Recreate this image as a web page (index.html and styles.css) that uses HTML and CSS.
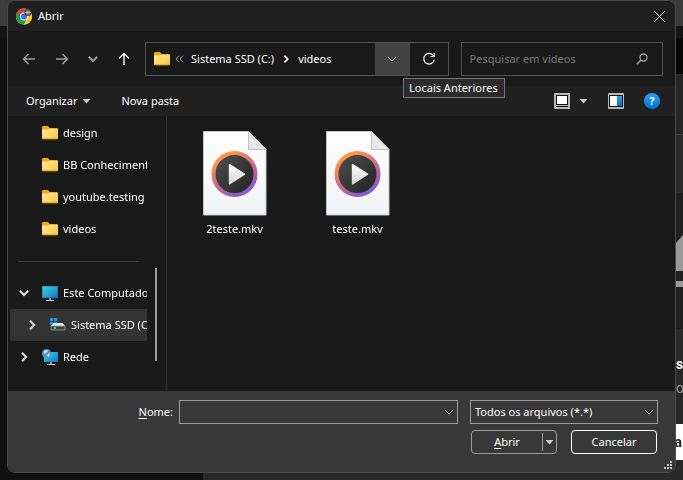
FILE: index.html
```html
<!DOCTYPE html>
<html lang="pt-BR">
<head>
<meta charset="utf-8">
<title>Abrir</title>
<link rel="stylesheet" href="styles.css">
</head>
<body>
<svg class="defs" width="0" height="0" aria-hidden="true">
  <defs>
    <linearGradient id="g-folder" x1="0" y1="0" x2="1" y2="1"><stop offset="0" stop-color="#ffe9a2"/><stop offset="1" stop-color="#fdc736"/></linearGradient>
    <linearGradient id="g-screen" x1="0" y1="0" x2="1" y2="1"><stop offset="0" stop-color="#3fd6e0"/><stop offset="1" stop-color="#0f74c8"/></linearGradient>
    <linearGradient id="g-paper" x1="0" y1="0" x2="0" y2="1"><stop offset="0" stop-color="#fdfdfd"/><stop offset="1" stop-color="#f3f4f7"/></linearGradient>
    <linearGradient id="g-ring" x1="0.2" y1="0" x2="0.8" y2="1"><stop offset="0.1" stop-color="#ff9447"/><stop offset="0.5" stop-color="#cf6d84"/><stop offset="0.95" stop-color="#8459cf"/></linearGradient>
    <linearGradient id="g-disc" x1="0" y1="0" x2="1" y2="1"><stop offset="0" stop-color="#505050"/><stop offset="1" stop-color="#202020"/></linearGradient>
    <linearGradient id="g-play" x1="0" y1="0" x2="0" y2="1"><stop offset="0" stop-color="#ffffff"/><stop offset="1" stop-color="#d4d4d4"/></linearGradient>
    <linearGradient id="g-fold" x1="0" y1="1" x2="1" y2="0"><stop offset="0" stop-color="#e2e2e2"/><stop offset="1" stop-color="#f8f8f8"/></linearGradient>
    <linearGradient id="g-help" x1="0" y1="0" x2="0" y2="1"><stop offset="0" stop-color="#27a1ee"/><stop offset="1" stop-color="#0673d3"/></linearGradient>
  </defs>
  <symbol id="folder" viewBox="0 0 16 14">
    <path d="M0 1.2Q0 0 1.2 0H6L8 2.2H14.8Q16 2.2 16 3.4V8H0z" fill="#f5a90c"/>
    <path d="M0 4.2Q0 3.6 .8 3.6H6.2L7.8 2.6H15.2Q16 2.6 16 3.4V12Q16 13.2 14.8 13.2H1.2Q0 13.2 0 12z" fill="url(#g-folder)"/>
    <path d="M.4 12.6H15.6" stroke="#e5a11c" stroke-width=".8"/>
  </symbol>
  <symbol id="chevron" viewBox="0 0 10 10"><path d="M.8 2.8 5 7 9.2 2.8" fill="none" stroke="currentColor"/></symbol>
  <symbol id="chevron-right" viewBox="0 0 10 10"><path d="M3 .8 7.2 5 3 9.2" fill="none" stroke="currentColor"/></symbol>
  <symbol id="triangle" viewBox="0 0 8 5"><path d="M0 0H8L4 4.6z" fill="currentColor"/></symbol>
  <symbol id="monitor" viewBox="0 0 16 15">
    <path d="M0 0H16V12H0z" fill="url(#g-screen)"/><path d="M.3 .3H15.7V11.7H.3z" fill="none" stroke="#17688f" stroke-width=".6"/>
    <path d="M7 12H9V14H7z" fill="#8d99a1"/><path d="M4 14H12V15H4z" fill="#c4ccd1"/>
  </symbol>
  <symbol id="media-file" viewBox="0 0 64 85">
    <path d="M.5 .5H45.500L63 18.500V84H.5z" fill="url(#g-paper)" stroke="#c4c6c6"/>
    <path d="M45.500 .5V18.500H63z" fill="url(#g-fold)" stroke="#c2c2c2"/>
    <circle cx="31.500" cy="43" r="21" fill="url(#g-disc)" stroke="url(#g-ring)" stroke-width="4"/>
    <path d="M26.500 33.500V53L41.500 43.200z" fill="url(#g-play)" stroke="url(#g-play)" stroke-width="1.400" stroke-linejoin="round"/>
  </symbol>
</svg>

<div class="backdrop" aria-hidden="true">
  <div class="tabstrip"><i class="tab-mark"></i></div>
  <div class="browser-bar"></div>
  <div class="address-line"></div>
  <div class="site">
    <div class="site-menu"></div>
    <div class="site-main">
      <div class="site-head"></div>
      <div class="site-row"></div>
      <div class="site-art">
        <svg width="7" height="52" viewBox="0 0 7 52"><path d="M0 8 7 0V36H0zM0 46H7V52H0z" fill="#999"/></svg>
      </div>
      <div class="site-text"><b>s</b><span>o</span></div>
      <div class="site-button">a</div>
    </div>
  </div>
</div>

<main class="dialog" role="dialog" aria-labelledby="title">
  <header class="titlebar">
    <svg width="17" height="17" viewBox="0 0 17 17" aria-hidden="true">
      <circle cx="8" cy="8.500" r="8" fill="#fff"/>
      <path d="M8 8.500 1.070 4.500A8 8 0 0 1 14.930 4.500z" fill="#e33b2e"/>
      <path d="M1.070 4.500A8 8 0 0 0 8 16.500L11.400 10.500 8 8.500z" fill="#219a4b"/>
      <path d="M14.930 4.500A8 8 0 0 1 8 16.500L11.400 10.500 8 4.500z" fill="#fbc51c"/>
      <path d="M1.070 4.500 4.800 10.400 8 8.500V4.500z" fill="#e33b2e"/>
      <circle cx="8" cy="8.500" r="4" fill="#fff"/><circle cx="8" cy="8.500" r="3.100" fill="#2878e8"/>
      <circle cx="12" cy="4.500" r="3.600" fill="#343434"/>
      <path d="M9 4.500H15M12 1.500V7.500M9.800 2.500 14.200 6.500M14.200 2.500 9.800 6.500" stroke="#c8c8c8" stroke-width=".8"/>
    </svg>
    <h1 id="title">Abrir</h1>
    <button class="bare close" aria-label="Fechar"><svg width="11" height="11" viewBox="0 0 11 11"><path d="M.5 .5 10.500 10.500M10.500 .5 .5 10.500" stroke="#fff"/></svg></button>
  </header>

  <nav class="navbar">
    <div class="history">
      <button class="bare dim" aria-label="Voltar"><svg width="14" height="14" viewBox="0 0 14 14"><path d="M13 7H1.500M6.500 2 1.500 7 6.500 12" fill="none" stroke="currentColor" stroke-width="1.500"/></svg></button>
      <button class="bare dim" aria-label="Avançar"><svg width="14" height="14" viewBox="0 0 14 14"><path d="M1 7H12.500M7.500 2 12.500 7 7.500 12" fill="none" stroke="currentColor" stroke-width="1.500"/></svg></button>
      <button class="bare dim" aria-label="Locais recentes"><svg class="bold" width="10" height="10"><use href="#chevron"/></svg></button>
      <button class="bare" aria-label="Acima"><svg width="14" height="14" viewBox="0 0 14 14"><path d="M7 13V1.500M2 6.500 7 1.500 12 6.500" fill="none" stroke="currentColor" stroke-width="1.400"/></svg></button>
    </div>
    <div class="address">
      <svg width="16" height="14" aria-hidden="true"><use href="#folder"/></svg>
      <svg class="more" width="9" height="8" viewBox="0 0 9 8" aria-hidden="true"><path d="M4 .8 1 4 4 7.200M8 .8 5 4 8 7.200" fill="none" stroke="#aaa"/></svg>
      <a href="#">Sistema SSD (C:)</a>
      <svg class="bold crumb" width="8" height="8" aria-hidden="true"><use href="#chevron-right"/></svg>
      <a href="#">videos</a>
      <button class="bare previous" aria-label="Locais Anteriores" aria-describedby="tip"><svg width="10" height="10"><use href="#chevron"/></svg></button>
      <button class="bare refresh" aria-label="Atualizar"><svg width="14" height="14" viewBox="0 0 14 14"><path d="M11.600 4A5.300 5.300 0 1 0 12.300 7.500M12.200 1V4.500H8.600" fill="none" stroke="currentColor" stroke-width="1.200"/></svg></button>
      <span class="tooltip" id="tip" role="tooltip">Locais Anteriores</span>
    </div>
    <div class="search">
      <input type="text" aria-label="Pesquisar em videos" placeholder="Pesquisar em videos">
      <svg width="12" height="12" viewBox="0 0 12 12" aria-hidden="true"><circle cx="7.500" cy="4.500" r="3.500" fill="none" stroke="#a0a0a0" stroke-width="1.300"/><path d="M5 7 .8 11.200" stroke="#a0a0a0" stroke-width="1.500"/></svg>
    </div>
  </nav>

  <div class="toolbar">
    <button class="bare">Organizar <svg width="9" height="5"><use href="#triangle"/></svg></button>
    <button class="bare">Nova pasta</button>
    <div class="view-tools">
      <button class="bare view" aria-label="Modo de exibição">
        <svg width="16" height="16" viewBox="0 0 16 16"><rect width="16" height="16" rx="1" fill="#b5b9b9"/><path d="M2 2H14V14H2z" fill="#111"/><path d="M3 3H13V11H3z" fill="#fff"/><path d="M2 12H14V13H2z" fill="#b5b9b9"/></svg>
        <svg width="9" height="5"><use href="#triangle"/></svg>
      </button>
      <button class="bare" aria-label="Painel de visualização"><svg width="16" height="16" viewBox="0 0 16 16"><rect width="16" height="16" rx="1" fill="#b5b9b9"/><path d="M1 2H15V14H1z" fill="#111"/><path d="M2 3H9V13H2z" fill="#fff"/><path d="M9 3H14V13H9z" fill="url(#g-help)"/></svg></button>
      <button class="bare help" aria-label="Ajuda">?</button>
    </div>
  </div>

  <section class="content">
    <aside class="tree">
      <ul>
        <li><svg width="16" height="14"><use href="#folder"/></svg>design</li>
        <li><svg width="16" height="14"><use href="#folder"/></svg>BB Conhecimento</li>
        <li><svg width="16" height="14"><use href="#folder"/></svg>youtube.testing</li>
        <li><svg width="16" height="14"><use href="#folder"/></svg>videos</li>
      </ul>
      <hr>
      <ul>
        <li class="branch"><svg class="bold" width="10" height="10"><use href="#chevron"/></svg><svg width="16" height="15"><use href="#monitor"/></svg>Este Computador</li>
        <li class="branch child"><svg class="bold" width="10" height="10"><use href="#chevron-right"/></svg>
          <svg width="16" height="16" viewBox="0 0 16 16"><path d="M0 1H3.300V4.300H0zM4 1H7.300V4.300H4zM0 5H3.300V8.300H0zM4 5H7.300V8.300H4z" fill="#1499ef"/><path d="M3.500 6H12.500L15 9H1z" fill="#e5e7e8"/><path d="M1 9H15V13H1z" fill="#3e4342" stroke="#a8acac" stroke-width=".7"/><path d="M4 10H6V12H4z" fill="#2fe33c"/></svg>Sistema SSD (C:)</li>
        <li class="branch"><svg class="bold" width="10" height="10"><use href="#chevron-right"/></svg>
          <svg width="16" height="16" viewBox="0 0 16 16"><path d="M2 3H16V13H2z" fill="url(#g-screen)"/><path d="M8 13H10V15H8z" fill="#8d99a1"/><path d="M5 15H13V16H5z" fill="#c4ccd1"/><circle cx="4.500" cy="4.500" r="4.500" fill="#5897bd"/><path d="M2 2Q5 0 6 2L4 4 2 5zM6 5 8 4 7 8 5 7z" fill="#c8e3ef"/></svg>Rede</li>
      </ul>
      <div class="scrollbar"></div>
    </aside>
    <div class="files">
      <figure><svg width="64" height="85" aria-hidden="true"><use href="#media-file"/></svg><figcaption>2teste.mkv</figcaption></figure>
      <figure><svg width="64" height="85" aria-hidden="true"><use href="#media-file"/></svg><figcaption>teste.mkv</figcaption></figure>
    </div>
  </section>

  <footer class="footer">
    <label for="name"><u>N</u>ome:</label>
    <div class="combo">
      <input id="name" type="text">
      <button class="bare" aria-label="Nomes anteriores"><svg width="10" height="10"><use href="#chevron"/></svg></button>
    </div>
    <div class="combo filter">
      <select aria-label="Tipo de arquivo"><option>Todos os arquivos (*.*)</option></select>
      <svg width="10" height="10" aria-hidden="true"><use href="#chevron"/></svg>
    </div>
    <div class="actions">
      <div class="split">
        <button class="bare"><span><u>A</u>brir</span></button>
        <button class="bare arrow" aria-label="Mais opções de abrir"><svg width="9" height="5"><use href="#triangle"/></svg></button>
      </div>
      <button class="cancel">Cancelar</button>
    </div>
    <svg class="grip" width="8" height="8" viewBox="0 0 8 8" aria-hidden="true"><path d="M6 0H8V2H6zM3 3H5V5H3zM6 3H8V5H6zM0 6H2V8H0zM3 6H5V8H3zM6 6H8V8H6z" fill="#c4c4c4"/></svg>
  </footer>
</main>
</body>
</html>
```
FILE: styles.css
```css
* { box-sizing: border-box; }

body {
  margin: 0;
  min-height: 100vh;
  padding: 0 7px 7px;
  display: flex;
  overflow: hidden;
  background: #111;
  color: #fff;
  font: 11px/16px "Noto Sans", "Open Sans", sans-serif;
}

button, input, select { font: inherit; color: inherit; }
svg { display: block; flex: none; }
u { text-decoration: underline; text-underline-offset: 2px; }
ul, figure, h1 { margin: 0; padding: 0; list-style: none; }

.defs { position: absolute; }

.bare {
  display: flex;
  align-items: center;
  justify-content: center;
  padding: 0;
  border: 0;
  background: none;
}

.bold { stroke-width: 2px; }

/* Page behind the dialog */
.backdrop {
  position: fixed;
  inset: 0;
  display: flex;
  flex-direction: column;
}
.tabstrip { height: 26px; background: #3b3b3b; padding-left: 64px; }
.tab-mark { display: block; width: 16px; height: 1px; background: #d44; }
.browser-bar { height: 12px; background: #131313; }
.address-line { height: 36px; background: linear-gradient(90deg, #111 50%, #060606 50%); }
.site { flex: 1; display: flex; }
.site-menu { width: 203px; background: #111; }
.site-main {
  flex: 1;
  display: flex;
  flex-direction: column;
  align-items: stretch;
  background: #282828;
}
.site-head { height: 61px; background: #262626; border-bottom: 1px solid #444; }
.site-row { height: 58px; background: #2a2a2a; }
.site-art {
  display: flex;
  justify-content: flex-end;
  align-items: flex-start;
  height: 136px;
  padding-top: 42px;
  background: #1f1f1f;
}
.site-text {
  display: flex;
  flex-direction: column;
  align-items: flex-end;
  gap: 8px;
  padding: 27px 3px 28px 0;
  font: 14px/16px Roboto, sans-serif;
}
.site-text span { color: #999; }
.site-text span, .site-text b { width: 4px; }
.site-button {
  height: 36px;
  padding-right: 1px;
  background: #fff;
  color: #222;
  text-align: right;
  font: bold 14px/36px Roboto, sans-serif;
}

/* Dialog */
.dialog {
  position: relative;
  flex: 1;
  display: flex;
  flex-direction: column;
  overflow: hidden;
  border: 1px solid #4b4b4b;
  border-radius: 8px;
  background: #191919;
}

.titlebar {
  display: flex;
  align-items: center;
  gap: 5px;
  height: 30px;
  padding: 0 10px 0 8px;
  background: #202020;
}
.titlebar h1 { flex: 1; font: inherit; }

.navbar {
  display: grid;
  grid-template-columns: auto minmax(0, 3fr) minmax(0, 2fr);
  align-items: center;
  gap: 12px;
  height: 55px;
  padding: 0 12px 0 14px;
}
.history {
  display: grid;
  grid-template-columns: 14px 14px 10px 14px;
  column-gap: 19px;
  margin-right: 2px;
}
.dim { color: #9b9b9b; }

.address, .search {
  display: flex;
  align-items: center;
  height: 34px;
  border: 1px solid #535353;
}
.address { position: relative; padding-left: 8px; }
.address a { color: inherit; text-decoration: none; white-space: nowrap; }
.more { margin: 0 7px 0 5px; }
.crumb { margin: 0 8px; }
.previous { width: 35px; height: 32px; margin-left: auto; background: #434343; }
.refresh { width: 38px; height: 32px; }
.tooltip {
  position: absolute;
  top: 35px;
  left: 257px;
  z-index: 1;
  padding: 1px 6px 1px 5px;
  border: 1px solid #767676;
  background: #2b2b2b;
  white-space: nowrap;
}
.search { padding: 0 14px 0 8px; }
.search input {
  flex: 1;
  min-width: 0;
  padding: 0;
  border: 0;
  outline: 0;
  background: none;
}
.search input::placeholder { color: #797979; opacity: 1; }

.toolbar {
  display: flex;
  align-items: center;
  gap: 30px;
  height: 30px;
  padding: 0 15px 0 18px;
  background: #202020;
}
.toolbar .bare { gap: 5px; }
.toolbar use { color: #c8c8c8; }
.view-tools { display: flex; align-items: center; gap: 20px; margin-left: auto; }
.toolbar .view { gap: 9px; }
.help {
  width: 16px;
  height: 16px;
  border-radius: 50%;
  background: linear-gradient(#27a1ee, #0673d3);
  font-weight: bold;
}

.content { flex: 1; display: flex; min-height: 0; }
.tree {
  position: relative;
  width: 159px;
  padding: 1px 19px 0 2px;
  border-right: 1px solid #303030;
}
.tree ul { overflow: hidden; }
.tree li {
  display: flex;
  align-items: center;
  gap: 5px;
  height: 32px;
  padding-left: 32px;
  white-space: nowrap;
}
.tree .branch { padding-left: 9px; }
.tree .branch svg:first-child { margin-right: 8px; color: #ddd; }
.tree .child { padding-left: 17px; background: #333; border-radius: 2px 0 0 2px; }
.tree hr { height: 1px; margin: 16px 8px 15px; border: 0; background: #3b3b3b; }
.scrollbar {
  position: absolute;
  top: 152px;
  right: 9px;
  width: 2px;
  height: 93px;
  background: #9c9c9c;
}

.files {
  flex: 1;
  display: flex;
  align-items: flex-start;
  padding: 15px 6px;
}
.files figure {
  display: flex;
  flex-direction: column;
  align-items: center;
  gap: 5px;
  width: 123px;
}

.footer {
  position: relative;
  display: grid;
  grid-template-columns: 165px minmax(0, 285fr) minmax(0, 200fr);
  row-gap: 6px;
  padding: 9px 17px 18px 0;
  background: #383838;
}
.footer label { align-self: center; text-align: right; }
.combo {
  display: flex;
  align-items: center;
  height: 24px;
  margin-left: 6px;
  border: 1px solid #9b9b9b;
}
.combo input {
  flex: 1;
  min-width: 0;
  padding: 0 4px;
  border: 0;
  outline: 0;
  background: none;
}
.combo .bare { width: 17px; height: 22px; color: #bbb; }
.filter { position: relative; margin-left: 12px; }
.filter select {
  appearance: none;
  width: 100%;
  height: 22px;
  padding: 0 20px 0 4px;
  border: 0;
  background: none;
}
.filter svg { position: absolute; right: 3px; color: #bbb; pointer-events: none; }
.actions {
  grid-column: 3;
  display: grid;
  grid-template-columns: 1fr 1fr;
  gap: 14px;
  margin: 0 1px 0 13px;
}
.split, .cancel {
  height: 24px;
  border: 1px solid #9b9b9b;
  border-radius: 4px;
}
.split { display: flex; align-items: center; }
.split .bare { flex: 1; height: 22px; }
.split .arrow { flex: none; width: 14px; height: 18px; border-left: 1px solid #9b9b9b; color: #ccc; }
.cancel { padding: 0; border-color: #fff; background: none; }
.grip { position: absolute; right: 3px; bottom: 3px; }
```
